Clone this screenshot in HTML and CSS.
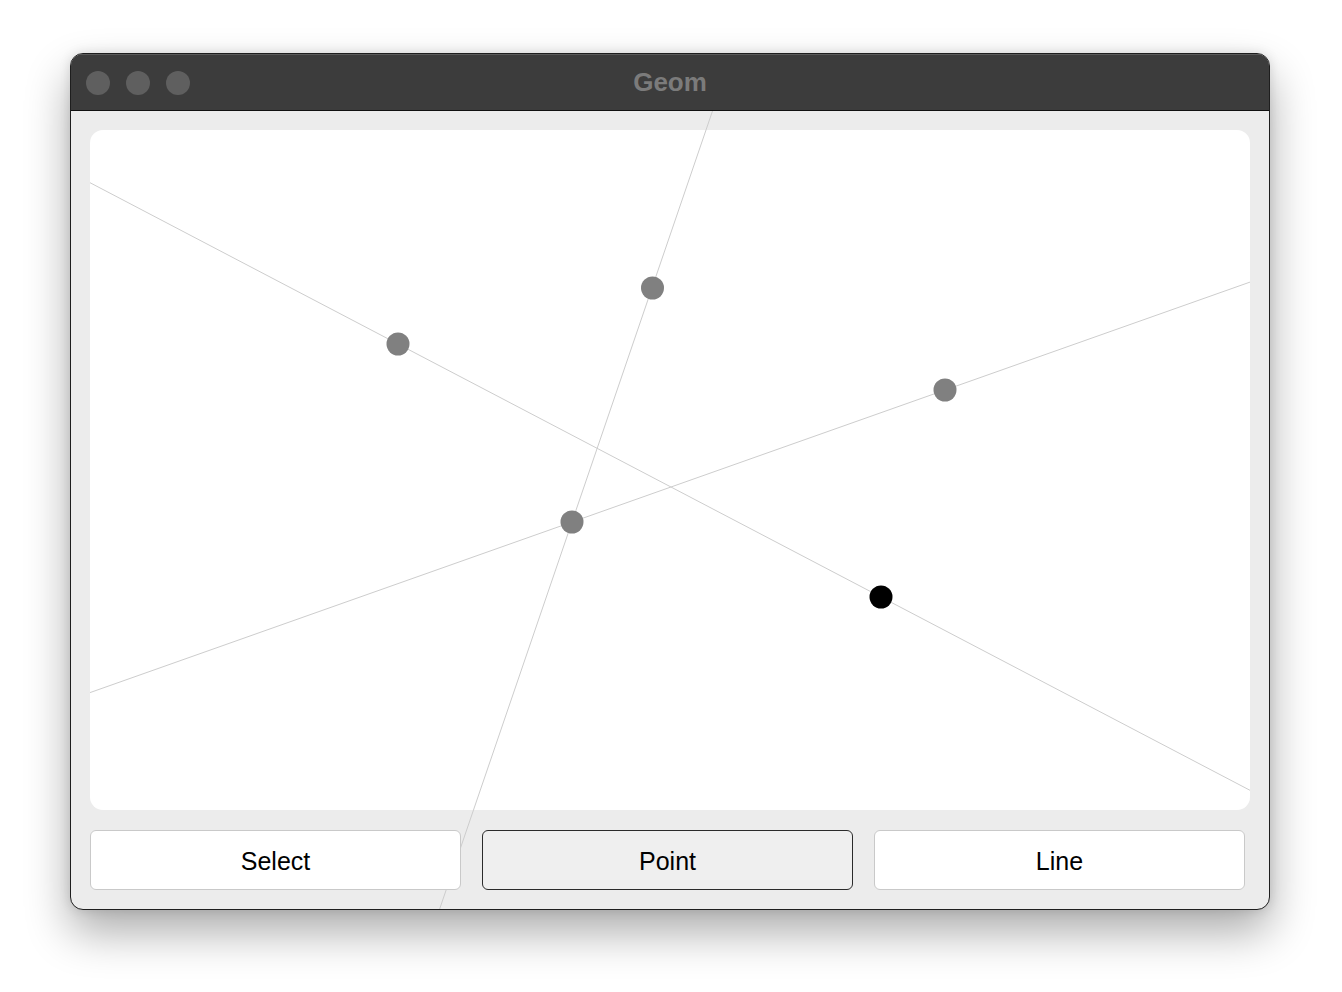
FILE: index.html
```html
<!DOCTYPE html>
<html>
<head>
<meta charset="utf-8">
<link rel="stylesheet" href="styles.css">
<title>Geom</title>
</head>
<body>
<div class="window">
  <div class="titlebar">
    <div class="lights">
      <span class="light"></span><span class="light"></span><span class="light"></span>
    </div>
    <div class="title">Geom</div>
  </div>
  <div class="content">
    <div class="canvas"></div>
    <svg class="overlay" width="1198" height="798" viewBox="0 0 1198 798">
      <g stroke="#cdcdcd" stroke-width="1" fill="none">
        <line x1="19" y1="71.7" x2="1179" y2="679.3"/>
        <line x1="19" y1="581.6" x2="1179" y2="171.1"/>
        <line x1="641.5" y1="0" x2="368.3" y2="799"/>
      </g>
      <g fill="#808080">
        <circle cx="327" cy="233" r="11.5"/>
        <circle cx="581.5" cy="177" r="11.5"/>
        <circle cx="874" cy="279" r="11.5"/>
        <circle cx="501" cy="411" r="11.5"/>
      </g>
      <circle cx="810" cy="486" r="11.5" fill="#000"/>
    </svg>
    <div class="buttons">
      <button class="btn">Select</button>
      <button class="btn active">Point</button>
      <button class="btn">Line</button>
    </div>
  </div>
</div>
</body>
</html>
```
FILE: styles.css
```css
html, body {
  margin: 0;
  padding: 0;
  background: #ffffff;
}
body {
  box-sizing: border-box;
  min-height: 992px;
  padding: 53px 0 0 70px;
  font-family: "Liberation Sans", Arial, sans-serif;
}
.window {
  box-sizing: border-box;
  width: 1200px;
  height: 857px;
  border: 1px solid #1e1e1e;
  border-radius: 13px;
  overflow: hidden;
  background: #ececec;
  box-shadow: 0 22px 45px rgba(0, 0, 0, 0.33), 0 0 12px rgba(0, 0, 0, 0.12);
  display: flex;
  flex-direction: column;
}
.titlebar {
  height: 56px;
  flex: none;
  background: #3c3c3c;
  border-bottom: 1px solid #111;
  display: flex;
  align-items: center;
  position: relative;
  box-shadow: inset 0 1px 0 #5a5a5a;
}
.lights {
  display: flex;
  gap: 16px;
  padding-left: 15px;
  padding-top: 2px;
}
.light {
  width: 24px;
  height: 24px;
  border-radius: 50%;
  background: #5f5f5f;
}
.title {
  position: absolute;
  left: 0;
  right: 0;
  top: 0;
  bottom: 0;
  display: flex;
  align-items: center;
  justify-content: center;
  color: #7b7b7b;
  font-weight: bold;
  font-size: 26px;
}
.content {
  position: relative;
  flex: 1;
  padding: 19px 19px 0 19px;
  display: flex;
  flex-direction: column;
  gap: 20px;
}
.canvas {
  height: 680px;
  background: #ffffff;
  border-radius: 13px;
}
.overlay {
  position: absolute;
  left: 0;
  top: 0;
  z-index: 1;
}
.buttons {
  position: relative;
  z-index: 2;
  display: grid;
  grid-template-columns: 371px 371px 371px;
  gap: 21px;
}
.btn {
  height: 60px;
  box-sizing: border-box;
  background: #ffffff;
  border: 1px solid #c9c9c9;
  border-radius: 6px;
  font-family: "Liberation Sans", Arial, sans-serif;
  font-size: 25px;
  color: #000;
  padding: 2px 0 0 0;
}
.btn.active {
  background: #efefef;
  border-color: #2b2b2b;
}
```
